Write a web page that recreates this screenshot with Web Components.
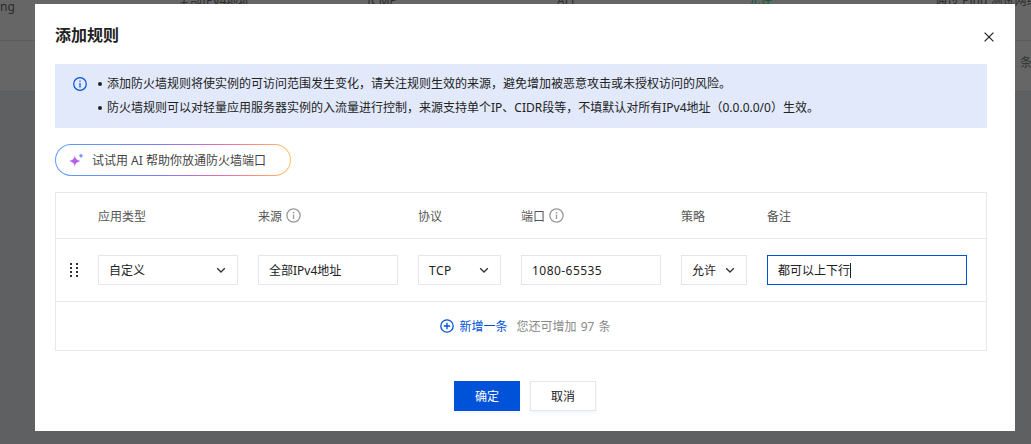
<!doctype html>
<html lang="zh">
<head>
<meta charset="utf-8">
<title>添加规则</title>
<style>
  html, body { margin: 0; height: 100%; overflow: hidden; }
  body {
    font: 12px "Noto Sans", "Noto Sans CJK SC", sans-serif;
    color: #222;
  }
</style>
</head>
<body>
<page-backdrop>
  <rule-modal heading="添加规则">
    <notice-alert>
      <li>添加防火墙规则将使实例的可访问范围发生变化，请关注规则生效的来源，避免增加被恶意攻击或未授权访问的风险。</li>
      <li>防火墙规则可以对轻量应用服务器实例的入流量进行控制，来源支持单个IP、CIDR段等，不填默认对所有IPv4地址（0.0.0.0/0）生效。</li>
    </notice-alert>
    <ai-button>试试用 AI 帮助你放通防火墙端口</ai-button>
    <rule-table></rule-table>
    <modal-actions></modal-actions>
  </rule-modal>
</page-backdrop>

<script>
const chevron = `<svg width="12" height="12" viewBox="0 0 12 12" fill="none" stroke="currentColor" stroke-width="1.3"><path d="M2.2 4.2 6 8l3.8-3.8"/></svg>`

// circle with an "i" in it, used next to the column titles
const infoIcon = `<svg width="15" height="15" viewBox="0 0 15 15" fill="none" stroke="#999" stroke-width="1.3"><circle cx="7.5" cy="7.5" r="6.6"/><path d="M7.500 6.400v4.600M7.500 4v1.400"/></svg>`

class PageBackdrop extends HTMLElement {
  constructor() {
    super()
    this.attachShadow({ mode: 'open' })
    this.shadowRoot.innerHTML = `
      <style>
        :host {
          display: block;
          position: relative;
          height: 444px;
          overflow: hidden;
          background: #5f6062;
          color: #2b2b2b;
        }
        .top {
          height: 40px;
          border-bottom: 1px solid #5b5b5b;
          background: #666;
          font-size: 12px;
          line-height: 14px;
        }
        .band { height: 50px; background: #666; border-bottom: 1px solid #5b5b5b; }
        .ng { position: absolute; left: 0; top: 0; }
        .cell { position: absolute; top: -6px; white-space: nowrap; }
        .tail { position: absolute; left: 1020px; top: 53px; color: #333; }
      </style>
      <div class="top">
        <span class="ng">ng</span>
        <span class="cell" style="left:178px">全部IPv4地址</span>
        <span class="cell" style="left:367px">ICMP</span>
        <span class="cell" style="left:557px">ALL</span>
        <span class="cell" style="left:748px;color:#0a5c2e">允许</span>
        <span class="cell" style="left:935px">通过 Ping 测试网络</span>
      </div>
      <div class="band"></div>
      <span class="tail">条</span>
      <slot></slot>
    `
  }
}

class RuleModal extends HTMLElement {
  constructor() {
    super()
    this.attachShadow({ mode: 'open' })
    this.shadowRoot.innerHTML = `
      <style>
        :host {
          display: flex;
          flex-direction: column;
          position: absolute;
          left: 35px;
          top: 4px;
          width: 980px;
          height: 427px;
          box-sizing: border-box;
          padding: 19px 28px 0 20px;
          background: #fff;
          color: #222;
        }
        header {
          display: flex;
          justify-content: space-between;
          align-items: center;
          height: 24px;
          margin-bottom: 17px;
        }
        h2 { margin: 0; font-size: 16px; font-weight: 700; line-height: 24px; color: #222; }
        svg { margin: 3px -8px 0 0; }
      </style>
      <header>
        <h2>${this.getAttribute('heading')}</h2>
        <svg width="12" height="12" viewBox="0 0 12 12" fill="none" stroke="#222" stroke-width="1.2"><path d="M1.600 1.600l8.800 8.800M10.400 1.600l-8.800 8.800"/></svg>
      </header>
      <slot></slot>
    `
  }
}

class NoticeAlert extends HTMLElement {
  constructor() {
    super()
    this.attachShadow({ mode: 'open' })
    this.shadowRoot.innerHTML = `
      <style>
        :host {
          display: flex;
          box-sizing: border-box;
          width: 932px;
          height: 64px;
          padding: 8px 18px;
          gap: 11px;
          background: #e1e9fb;
          line-height: 24px;
          color: #222;
        }
        svg { flex: none; margin-top: 5px; }
        ul { margin: 0; padding: 0; list-style: none; }
      </style>
      <svg width="14" height="14" viewBox="0 0 14 14" fill="none" stroke="#0052d9" stroke-width="1.2"><circle cx="7" cy="7" r="6.300"/><path d="M7 6v4.400M7 3.400v1.400"/></svg>
      <ul><slot></slot></ul>
    `
    // bullets come from the items themselves so that they stay light dom
    for (const li of this.querySelectorAll('li')) {
      li.style.cssText = 'display:flex;align-items:center;white-space:nowrap'
      li.insertAdjacentHTML('afterbegin', '<span style="width:4px;height:4px;border-radius:50%;background:#222;margin-right:5px;flex:none"></span>')
    }
  }
}

class AiButton extends HTMLElement {
  constructor() {
    super()
    this.attachShadow({ mode: 'open' })
    this.shadowRoot.innerHTML = `
      <style>
        :host {
          display: flex;
          align-items: center;
          gap: 8px;
          box-sizing: border-box;
          width: 236px;
          height: 32px;
          margin: 16px 0;
          padding: 0 13px;
          border: 1px solid transparent;
          border-radius: 16px;
          background:
            linear-gradient(#fff, #fff) padding-box,
            linear-gradient(90deg, #5b9dff 0%, #7d7cf2 45%, #e66fb0 72%, #fb8f7a 85%, #ffc46a 100%) border-box;
          color: #444;
          white-space: nowrap;
        }
      </style>
      <svg width="15" height="15" viewBox="0 0 15 15">
        <path fill="#b45ff0" d="M5.800 2.200C6.300 5.600 7.500 6.900 11.400 8 7.500 9.100 6.300 10.400 5.800 13.800 5.300 10.400 4.100 9.100.200 8 4.100 6.900 5.300 5.600 5.800 2.200Z"/>
        <path fill="#7f8cf6" d="M12 0c.300 1.700.9 2.300 2.800 2.800-1.900.500-2.500 1.100-2.800 2.800-.300-1.700-.9-2.300-2.800-2.800C11.100 2.300 11.700 1.700 12 0Z"/>
      </svg>
      <slot></slot>
    `
  }
}

class SelectBox extends HTMLElement {
  constructor() {
    super()
    this.attachShadow({ mode: 'open' })
    this.shadowRoot.innerHTML = `
      <style>
        :host {
          display: flex;
          align-items: center;
          justify-content: space-between;
          box-sizing: border-box;
          height: 30px;
          padding: 0 10px;
          border: 1px solid #e4e6ef;
          color: #222;
          white-space: nowrap;
        }
        svg { flex: none; color: #333; }
      </style>
      <slot></slot>${chevron}
    `
  }
}

class TextBox extends HTMLElement {
  constructor() {
    super()
    this.attachShadow({ mode: 'open' })
    this.shadowRoot.innerHTML = `
      <style>
        :host {
          display: flex;
          align-items: center;
          box-sizing: border-box;
          height: 30px;
          padding: 0 10px;
          border: 1px solid #e4e6ef;
          color: #222;
          white-space: nowrap;
        }
        :host([focused]) { border: 1px solid #0052d9; }
        i { width: 1px; height: 15px; background: #222; }
      </style>
      <slot></slot>${this.hasAttribute('focused') ? '<i></i>' : ''}
    `
  }
}

class RuleTable extends HTMLElement {
  constructor() {
    super()
    this.attachShadow({ mode: 'open' })
    this.shadowRoot.innerHTML = `
      <style>
        :host {
          display: block;
          box-sizing: border-box;
          width: 932px;
          height: 159px;
          border: 1px solid #e7e8ee;
        }
        .row {
          display: grid;
          grid-template-columns: 140px 140px 83px 140px 66px 200px;
          gap: 20px;
          align-items: center;
          padding-left: 42px;
          border-bottom: 1px solid #e7e8ee;
          position: relative;
        }
        .head { height: 46px; box-sizing: border-box; color: #555; }
        .head span { display: flex; align-items: center; gap: 4px; }
        .body { height: 63px; box-sizing: border-box; }
        .grip {
          position: absolute;
          left: 14px;
          top: 24px;
          display: grid;
          grid-template-columns: 2px 2px;
          gap: 2px 4px;
        }
        .grip b { width: 2px; height: 2px; background: #333; }
        .add {
          height: 48px;
          display: flex;
          align-items: center;
          justify-content: center;
          gap: 6px;
          color: #0052d9;
          padding-left: 8px;
        }
        .left { color: #888; margin-left: 3px; word-spacing: 1px; }
        .wide { letter-spacing: .45px; }
      </style>
      <div class="row head">
        <span>应用类型</span>
        <span>来源 ${infoIcon}</span>
        <span>协议</span>
        <span>端口 ${infoIcon}</span>
        <span>策略</span>
        <span>备注</span>
      </div>
      <div class="row body">
        <div class="grip"><b></b><b></b><b></b><b></b><b></b><b></b><b></b><b></b></div>
        <select-box>自定义</select-box>
        <text-box>全部IPv4地址</text-box>
        <select-box><span class="wide">TCP</span></select-box>
        <text-box><span class="wide">1080-65535</span></text-box>
        <select-box>允许</select-box>
        <text-box focused>都可以上下行</text-box>
      </div>
      <div class="add">
        <svg width="14" height="14" viewBox="0 0 14 14" fill="none" stroke="#0052d9" stroke-width="1.3"><circle cx="7" cy="7" r="6.200"/><path d="M7 3.800v6.400M3.800 7h6.400"/></svg>
        <span>新增一条</span>
        <span class="left">您还可增加 97 条</span>
      </div>
    `
  }
}

class ModalActions extends HTMLElement {
  constructor() {
    super()
    this.attachShadow({ mode: 'open' })
    this.shadowRoot.innerHTML = `
      <style>
        :host {
          display: flex;
          justify-content: center;
          gap: 10px;
          margin-top: 30px;
          padding-left: 8px;
          width: 932px;
          box-sizing: border-box;
        }
        button {
          width: 66px;
          height: 30px;
          padding: 0;
          font: inherit;
          border: 1px solid #e4e6ef;
          background: #fff;
          color: #222;
          box-shadow: 0 2px 3px rgba(0, 82, 217, .06);
        }
        .primary { border-color: #0052d9; background: #0052d9; color: #fff; }
      </style>
      <button class="primary">确定</button>
      <button>取消</button>
    `
  }
}

customElements.define('page-backdrop', PageBackdrop)
customElements.define('rule-modal', RuleModal)
customElements.define('notice-alert', NoticeAlert)
customElements.define('ai-button', AiButton)
customElements.define('select-box', SelectBox)
customElements.define('text-box', TextBox)
customElements.define('rule-table', RuleTable)
customElements.define('modal-actions', ModalActions)
</script>
</body>
</html>
